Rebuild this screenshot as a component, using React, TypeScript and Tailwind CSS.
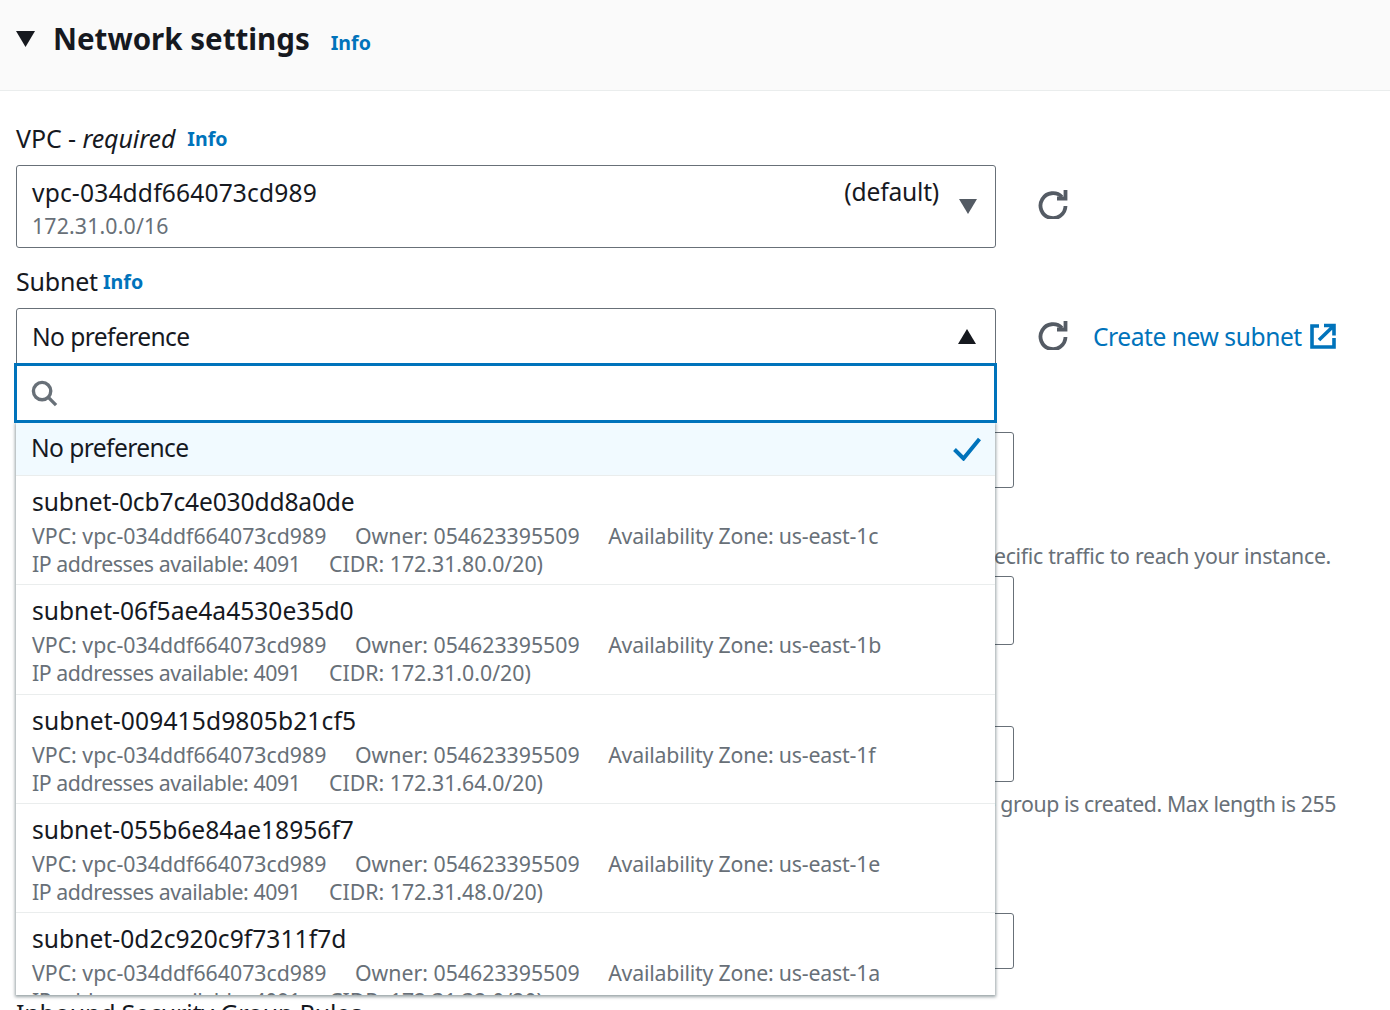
const F = "font-['Noto_Sans',sans-serif]";

function Refresh() {
  return (
    <svg viewBox="0 0 30 30" className="w-[30px] h-[30px]" fill="none" stroke="#545b64" strokeWidth="3.8">
      <path d="M24 8A12.5 12.5 0 1 0 27.5 17" />
      <path d="M19 9.5h8.5V1" />
    </svg>
  );
}

function Info({ className = "" }: { className?: string }) {
  return <span className={"text-[#0073bb] font-bold text-[19.6px] leading-none " + className}>Info</span>;
}

function Field({ h }: { h: string }) {
  return <div className={`w-[998px] ${h} border border-[#687078] rounded-[3px] bg-white`} />;
}

const subnets = [
  ["subnet-0cb7c4e030dd8a0de", "us-east-1c", "172.31.80.0/20)", "tracking-[-0.15px]"],
  ["subnet-06f5ae4a4530e35d0", "us-east-1b", "172.31.0.0/20)", "tracking-normal"],
  ["subnet-009415d9805b21cf5", "us-east-1f", "172.31.64.0/20)", "tracking-[0.12px]"],
  ["subnet-055b6e84ae18956f7", "us-east-1e", "172.31.48.0/20)", "tracking-normal"],
  ["subnet-0d2c920c9f7311f7d", "us-east-1a", "172.31.32.0/20)", "tracking-[0.04px]"],
];

function Dropdown() {
  return (
    <div className="absolute left-[14px] top-[363px] w-[983px]">
      <div className="relative z-10 h-[60px] border-[3px] border-[#0073bb] bg-white flex items-center pl-[15px]">
        <svg viewBox="0 0 28 28" className="w-[27px] h-[27px] -ml-px" fill="none" stroke="#687078" strokeWidth="3.5">
          <circle cx="11.5" cy="11.5" r="9" />
          <path d="M18 18l8 8" />
        </svg>
      </div>
      <div className="ml-[2px] w-[979px] h-[572px] bg-white overflow-hidden shadow-[0_1px_3px_1px_rgba(0,28,36,0.4)]">
        <div className="h-[53px] bg-[#f1faff] border-b border-[#eaeded] flex items-center justify-between pl-[15px] pr-[14px] text-[24.6px] tracking-[-0.6px] text-[#16191f]">
          <span className="-mt-[2px]">No preference</span>
          <svg viewBox="0 0 28 24" className="w-[28px] h-[24px]" fill="none" stroke="#0073bb" strokeWidth="4">
            <path d="M1.5 12.5L10.5 21.5L26.5 2" />
          </svg>
        </div>
        {subnets.map(([id, az, cidr, track]) => (
          <div key={id} className="h-[109.25px] shrink-0 border-b border-[#eaeded] pl-[16px] pt-[9px]">
            <div className={`text-[24.6px] leading-[34px] text-[#16191f] ${track}`}>{id}</div>
            <div className="mt-[3px] text-[21.3px] leading-[28px] text-[#687078] flex gap-[28.5px]">
              <span>VPC: vpc-034ddf664073cd989</span>
              <span>Owner: 054623395509</span>
              <span className="tracking-[-0.2px]">Availability Zone: {az}</span>
            </div>
            <div className="text-[21.3px] leading-[28px] text-[#687078] flex gap-[28.5px]">
              <span className="tracking-[-0.43px]">IP addresses available: 4091</span>
              <span>CIDR: {cidr}</span>
            </div>
          </div>
        ))}
      </div>
    </div>
  );
}

export default function App() {
  return (
    <div className={`${F} relative w-[1390px] h-[1010px] overflow-hidden bg-white text-[#16191f]`}>
      <header className="h-[91px] bg-[#fafafa] border-b border-[#eaeded] flex items-start pl-[16px] pt-[19px]">
        <svg viewBox="0 0 19 16" className="w-[19px] h-[16px] mt-[12px]" fill="#16191f"><path d="M0 0h19L9.5 16z" /></svg>
        <h1 className="ml-[18px] text-[29.5px] leading-[40px] font-bold">Network settings</h1>
        <Info className="ml-[21px] mt-[14px]" />
      </header>

      <div className="pl-[16px] pt-[31px]">
        <div className="h-[32px] flex items-center text-[25px] leading-[32px]">
          <span className="tracking-[-0.1px]">VPC - <i>required</i></span>
          <Info className="ml-[12px] mt-[2px]" />
        </div>
        <div className="mt-[11px] flex">
          <div className="w-[980px] h-[83px] border border-[#687078] rounded-[3px] flex justify-between pl-[15px] pr-[18px]">
            <div>
              <div className="text-[24.6px] leading-[34px] mt-[10px] tracking-[0.15px]">vpc-034ddf664073cd989</div>
              <div className="text-[21.3px] leading-[28px] mt-[2px] text-[#687078] tracking-[0.15px]">172.31.0.0/16</div>
            </div>
            <div className="flex items-start">
              <span className="text-[24.6px] leading-[34px] mt-[9px] tracking-[-0.2px]">(default)</span>
              <svg viewBox="0 0 18 15" className="ml-[20px] mt-[33px] w-[18px] h-[15px]" fill="#545b64"><path d="M0 0h18L9 15z" /></svg>
            </div>
          </div>
          <div className="ml-[42px] mt-[24px]"><Refresh /></div>
        </div>

        <div className="mt-[16px] h-[34px] flex items-center text-[25px] leading-[32px]">
          <span className="tracking-[-0.2px]">Subnet</span>
          <Info className="ml-[5px] mt-[2px]" />
        </div>
        <div className="mt-[10px] flex">
          <div className="w-[980px] h-[56px] border border-[#687078] rounded-t-[3px] flex items-center justify-between pl-[15px] pr-[19px] text-[24.6px] tracking-[-0.6px]">
            <span className="mt-[2px]">No preference</span>
            <svg viewBox="0 0 18 15" className="w-[18px] h-[15px]" fill="#16191f"><path d="M9 0l9 15H0z" /></svg>
          </div>
          <div className="ml-[42px] mt-[12px]"><Refresh /></div>
          <div className="ml-[25px] mt-[9px] flex items-center h-[38px] text-[#0073bb] text-[24.6px] tracking-[-0.45px]">
            <span className="mt-[2px]">Create new subnet</span>
            <svg viewBox="0 0 26 26" className="ml-[8px] w-[26px] h-[26px]" fill="none" stroke="#0073bb" strokeWidth="3.6">
              <path d="M9 3H2v21h22v-9" />
              <path d="M9 17L23.5 3M14 2.5h10v10" />
            </svg>
          </div>
        </div>

        <div className="mt-[68px]"><Field h="h-[56px]" /></div>
        <p className="mt-[54px] w-[1315px] text-right text-[21.3px] leading-[28px] text-[#687078] whitespace-nowrap tracking-[-0.3px]">Add rules to allow specific traffic to reach your instance.</p>
        <div className="mt-[6px]"><Field h="h-[69px]" /></div>
        <div className="mt-[81px]"><Field h="h-[56px]" /></div>
        <p className="mt-[8px] w-[1320px] text-right text-[21.3px] leading-[28px] text-[#687078] whitespace-nowrap tracking-[-0.41px]">The name can't be edited after the group is created. Max length is 255</p>
        <div className="mt-[95px]"><Field h="h-[56px]" /></div>
        <div className="mt-[27px] text-[25px] leading-[34px] tracking-[-0.2px]">Inbound Security Group Rules</div>
      </div>

      <Dropdown />
    </div>
  );
}
